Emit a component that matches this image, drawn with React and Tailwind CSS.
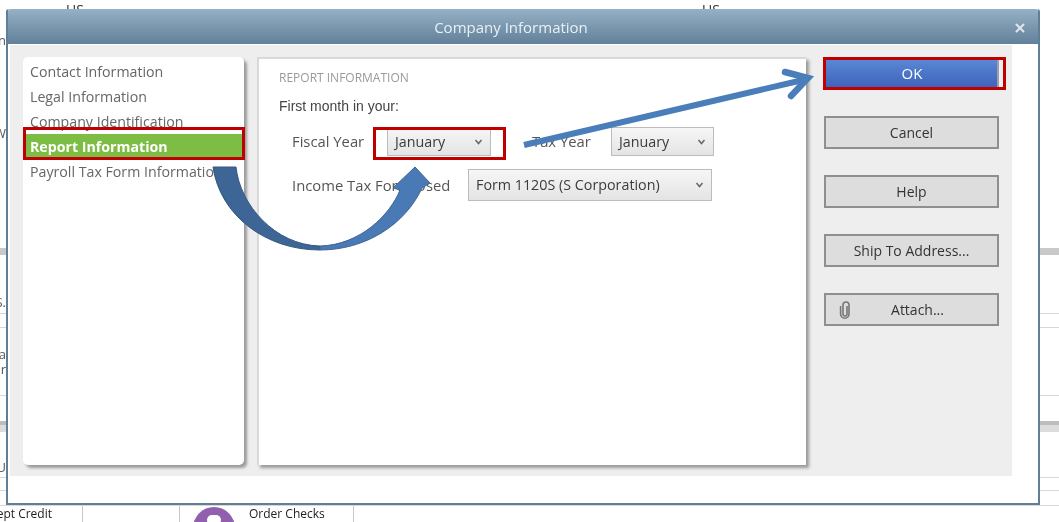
import React from "react";
import { X } from "lucide-react";

const bgRows = [
  { cls: "h-[20px]", text: "" },
  { cls: "h-[40px]", text: "n" },
  { cls: "h-[58px]", text: "" },
  { cls: "h-[30px]", text: "W" },
  { cls: "h-[100px]", text: "" },
  { cls: "h-[7px] bg-[#c9c9c9]", text: "" },
  { cls: "h-[37px]", text: "" },
  { cls: "h-[22px] border-b border-[#d8d8d8]", text: "S." },
  { cls: "h-[14px] border-b border-[#d8d8d8]", text: "" },
  { cls: "h-[68px] border-b border-[#d8d8d8]", text: "a\nr" },
  { cls: "h-[25px]", text: "" },
  { cls: "h-[11px] bg-[#dcdcdc] border-t-4 border-[#bdbdbd]", text: "" },
  { cls: "h-[25px]", text: "" },
  { cls: "h-[21px] border-b border-[#d8d8d8]", text: "U" },
  { cls: "h-[13px] border-b border-[#d8d8d8]", text: "" },
  { cls: "h-[14px]", text: "" },
];

const items = ["Contact Information", "Legal Information", "Company Identification"];

function Select({ label, className }) {
  return (
    <div className={`flex items-center justify-between border border-[#bcbcbc] bg-gradient-to-b from-[#f6f6f6] to-[#e4e4e4] pl-[7px] pr-[7px] text-[14.3px] text-[#3c3c3c] ${className}`}>
      <span>{label}</span>
      <svg width="9" height="6" viewBox="0 0 9 6" fill="none" stroke="#666" strokeWidth="1.5">
        <path d="M1.5 1 L4.5 4.5 L7.5 1" />
      </svg>
    </div>
  );
}

function GrayButton({ children, icon }) {
  return (
    <div className="relative flex h-[33px] w-[175px] items-center justify-center border-2 border-[#8f8f8f] bg-[#dddddd] text-[14px] text-[#333]">
      {icon}
      {children}
    </div>
  );
}

export default function App() {
  return (
    <div className="relative h-[522px] w-[1059px] overflow-hidden bg-white font-['Open_Sans',sans-serif] blur-[0.35px]">
      {/* page behind the dialog */}
      <div className="relative flex h-[522px] flex-col text-[13px] text-[#555]">
        <div className="absolute left-[66px] top-[-1px] text-[14px] text-[#333]">US</div>
        <div className="absolute left-[702px] top-[-1px] text-[14px] text-[#333]">US</div>
        {bgRows.map((r, i) => (
          <div key={i} className={`flex items-center justify-end ${r.cls}`}>
            <div className="mr-auto flex w-[6px] justify-end whitespace-pre text-right leading-[15px]">{r.text}</div>
          </div>
        ))}
        <div className="flex h-[17px] overflow-hidden border-t border-[#d8d8d8] text-[12px] leading-[15px] text-[#222]">
          <div className="flex w-[83px] justify-end whitespace-nowrap border-r border-[#c8c8c8] pr-[30px]">ept Credit</div>
          <div className="w-[97px] border-r border-[#c8c8c8]" />
          <div className="flex w-[174px] gap-[14px] border-r border-[#c8c8c8] pl-[13px]">
            <div className="mt-[1px] flex h-[42px] w-[42px] shrink-0 justify-center rounded-full bg-[#9060ae] pt-[8px]">
              <div className="h-[10px] w-[14px] rounded-full bg-white" />
            </div>
            <span className="whitespace-nowrap">Order Checks</span>
          </div>
        </div>
      </div>

      {/* dialog window */}
      <div className="absolute left-[6px] top-[9px] flex h-[496px] w-[1034px] flex-col rounded-t-[3px] border-2 border-t-0 border-[#5f7f97] bg-white">
        <div className="relative flex h-[35px] shrink-0 items-center justify-center rounded-t-[3px] bg-gradient-to-b from-[#95b1c6] to-[#62809a] pr-[24px] pt-[2px] text-[15px] text-[#eaf0f4]">
          Company Information
          <X className="absolute right-[11px] top-[12px] text-[#dfe6eb]" size={14} strokeWidth={3.5} />
        </div>
        <div className="ml-[2px] mt-[1px] flex h-[431px] w-[1002px] gap-[13px] bg-[#eeeeee] pl-[13px] pt-[12px]">
          {/* left list */}
          <div className="flex h-[408px] w-[221px] flex-col rounded-[5px] bg-white pt-[2px] text-[14.2px] text-[#666] shadow-[3px_3px_3px_#9a9a9a]">
            {items.map((t) => (
              <div key={t} className="flex h-[25px] items-center whitespace-nowrap pl-[7px]">{t}</div>
            ))}
            <div className="mx-[2px] flex h-[25px] items-center bg-[#7ebd43] pl-[5px] font-bold text-white">Report Information</div>
            <div className="flex h-[25px] items-center whitespace-nowrap pl-[7px]">Payroll Tax Form Information</div>
          </div>

          {/* report panel */}
          <div className="flex h-[408px] w-[549px] flex-col border-l-2 border-t-2 border-[#d9d9d9] bg-white pl-[20px] pt-[11px] shadow-[3px_3px_3px_#9a9a9a]">
            <div className="text-[12px] leading-[16px] text-[#9a9a9a]">REPORT INFORMATION</div>
            <div className="mt-[11px] font-['Liberation_Sans',sans-serif] text-[14px] leading-[18px] text-[#444]">First month in your:</div>
            <div className="mt-[12px] flex items-center pl-[13px] text-[14.8px] text-[#555]">
              <span className="w-[95px] whitespace-nowrap">Fiscal Year</span>
              <Select label="January" className="h-[29px] w-[104px]" />
              <span className="ml-[41px] w-[79px] whitespace-nowrap">Tax Year</span>
              <Select label="January" className="h-[29px] w-[103px]" />
            </div>
            <div className="mt-[13px] flex items-center pl-[13px] text-[14.8px] text-[#555]">
              <span className="w-[176px] whitespace-nowrap">Income Tax Form Used</span>
              <Select label="Form 1120S (S Corporation)" className="h-[32px] w-[244px]" />
            </div>
          </div>

          {/* buttons */}
          <div className="ml-[5px] flex w-[175px] flex-col gap-[26px]">
            <div className="flex h-[33px] w-[175px] items-center justify-center border-r-2 border-[#9a9fb0] bg-gradient-to-b from-[#5c8bd8] to-[#3c60b8] pl-[3px] text-[15px] text-white">OK</div>
            <GrayButton>Cancel</GrayButton>
            <GrayButton>Help</GrayButton>
            <GrayButton>Ship To Address...</GrayButton>
            <GrayButton
              icon={
                <svg className="absolute left-[13px] top-[6px]" width="12" height="18" viewBox="0 0 12 18" fill="none" stroke="#777" strokeWidth="1.6">
                  <path d="M8 5 V13 a2 2 0 0 1 -4 0 V4 a3 3 0 0 1 6 0 V13 a4.2 4.2 0 0 1 -8.4 0 V5" />
                </svg>
              }
            >
              <span className="pl-[12px]">Attach...</span>
            </GrayButton>
          </div>
        </div>
      </div>

      {/* annotations */}
      <div className="absolute left-[23px] top-[127px] h-[33px] w-[222px] border-[3px] border-[#c00000]" />
      <div className="absolute left-[373px] top-[127px] h-[33px] w-[133px] border-[3px] border-[#c00000]" />
      <div className="absolute left-[823px] top-[57px] h-[33px] w-[183px] border-[3px] border-[#c00000]" />
      <svg className="pointer-events-none absolute left-0 top-0" width="1059" height="522" viewBox="0 0 1059 522">
        <path d="M213 167 L236 167 C240 205 275 245 320 246 L320 250 C265 250 220 215 213 167 Z" fill="#3d6595" stroke="#35587f" strokeWidth="1" />
        <path d="M320 246 C360 245 390 215 400 190 L393 188 L415 167 L430 183 L422 188 C405 225 365 250 320 250 Z" fill="#4a7ab5" stroke="#3d6595" strokeWidth="1" />
        <path d="M524 145 L803 80" stroke="#4a7ebb" strokeWidth="6" fill="none" />
        <path d="M785 72 L808 78 L791 96" stroke="#4a7ebb" strokeWidth="6.5" strokeLinecap="round" strokeLinejoin="miter" fill="none" />
      </svg>
    </div>
  );
}
